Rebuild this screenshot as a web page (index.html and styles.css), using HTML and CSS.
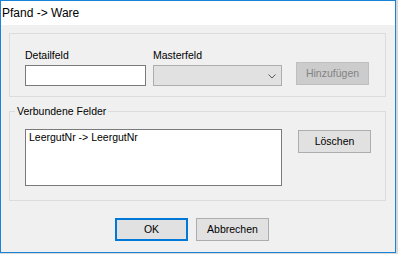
FILE: index.html
```html
<!DOCTYPE html>
<html lang="de">
<head>
  <meta charset="UTF-8">
  <title>Pfand -> Ware</title>
  <link rel="stylesheet" href="styles.css">
</head>
<body>
  <div class="window">
    <div class="titlebar">Pfand -&gt; Ware</div>

    <div class="content">
      <div class="group">
        <div class="field">
          <span class="label">Detailfeld</span>
          <div class="textbox"></div>
        </div>
        <div class="field">
          <span class="label">Masterfeld</span>
          <div class="combo">
            <svg width="8" height="5" viewBox="0 0 8 5"><polyline points="0.5,0.5 4,4 7.5,0.5" fill="none" stroke="#5a5a5a" stroke-width="1"/></svg>
          </div>
        </div>
        <div class="btn disabled add">Hinzufügen</div>
      </div>

      <fieldset class="group2">
        <legend>Verbundene Felder</legend>
        <div class="group2-body">
          <div class="listbox">
            <div class="item">LeergutNr -&gt; LeergutNr</div>
          </div>
          <div class="btn delete">Löschen</div>
        </div>
      </fieldset>

      <div class="footer">
        <div class="btn default">OK</div>
        <div class="btn">Abbrechen</div>
      </div>
    </div>
  </div>
</body>
</html>
```
FILE: styles.css
```css
html, body {
  margin: 0;
  padding: 0;
}
body {
  background: #d8d8d8;
  width: 398px;
  height: 254px;
  overflow: hidden;
  font-family: "Liberation Sans", Arial, sans-serif;
  font-size: 10.5px;
  color: #000;
}
.window {
  width: 394px;
  height: 251px;
  border: 1px solid #1883d7;
  background: #f0f0f0;
  display: flex;
  flex-direction: column;
}
.titlebar {
  height: 24px;
  line-height: 24px;
  background: #fff;
  font-size: 12px;
  padding-left: 1px;
}
.content {
  padding: 8px 9px 0 8px;
}

/* obere Gruppe */
.group {
  height: 62px;
  border: 1px solid #dcdcdc;
  padding: 15px 0 0 15px;
  box-sizing: border-box;
  height: 64px;
  display: flex;
  align-items: flex-end;
}
.field {
  display: flex;
  flex-direction: column;
  margin-right: 7px;
  padding-bottom: 10px;
}
.label {
  line-height: 13px;
  height: 13px;
  margin-bottom: 3px;
}
.textbox {
  width: 119px;
  height: 19px;
  border: 1px solid #7a7a7a;
  background: #fff;
}
.combo {
  width: 127px;
  height: 19px;
  border: 1px solid #adadad;
  background: #e1e1e1;
  display: flex;
  align-items: center;
  justify-content: flex-end;
}
.combo svg {
  margin-right: 5px;
  margin-top: 1px;
}

.btn {
  width: 71px;
  height: 21px;
  border: 1px solid #adadad;
  background: #e1e1e1;
  display: flex;
  align-items: center;
  justify-content: center;
  line-height: 13px;
}
.btn.disabled {
  background: #cccccc;
  border-color: #bfbfbf;
  color: #838383;
}
.btn.add {
  margin-left: 7px;
  margin-bottom: 11px;
}
.btn.default {
  width: 69px;
  height: 19px;
  border: 2px solid #0078d7;
}

/* Verbundene Felder */
.group2 {
  margin: 8px 0 0 0;
  padding: 0;
  border: 1px solid #dcdcdc;
  min-width: 0;
}
.group2 legend {
  margin-left: 5px;
  padding: 0 2px;
  line-height: 13px;
}
.group2-body {
  display: flex;
  align-items: flex-start;
  padding: 11px 0 14px 15px;
}
.listbox {
  width: 255px;
  height: 55px;
  border: 1px solid #7a7a7a;
  background: #fff;
}
.item {
  padding: 1px 3px;
  line-height: 13px;
}
.btn.delete {
  margin-left: 16px;
  margin-top: 1px;
}

.footer {
  display: flex;
  gap: 8px;
  padding: 17px 0 0 106px;
}
```
